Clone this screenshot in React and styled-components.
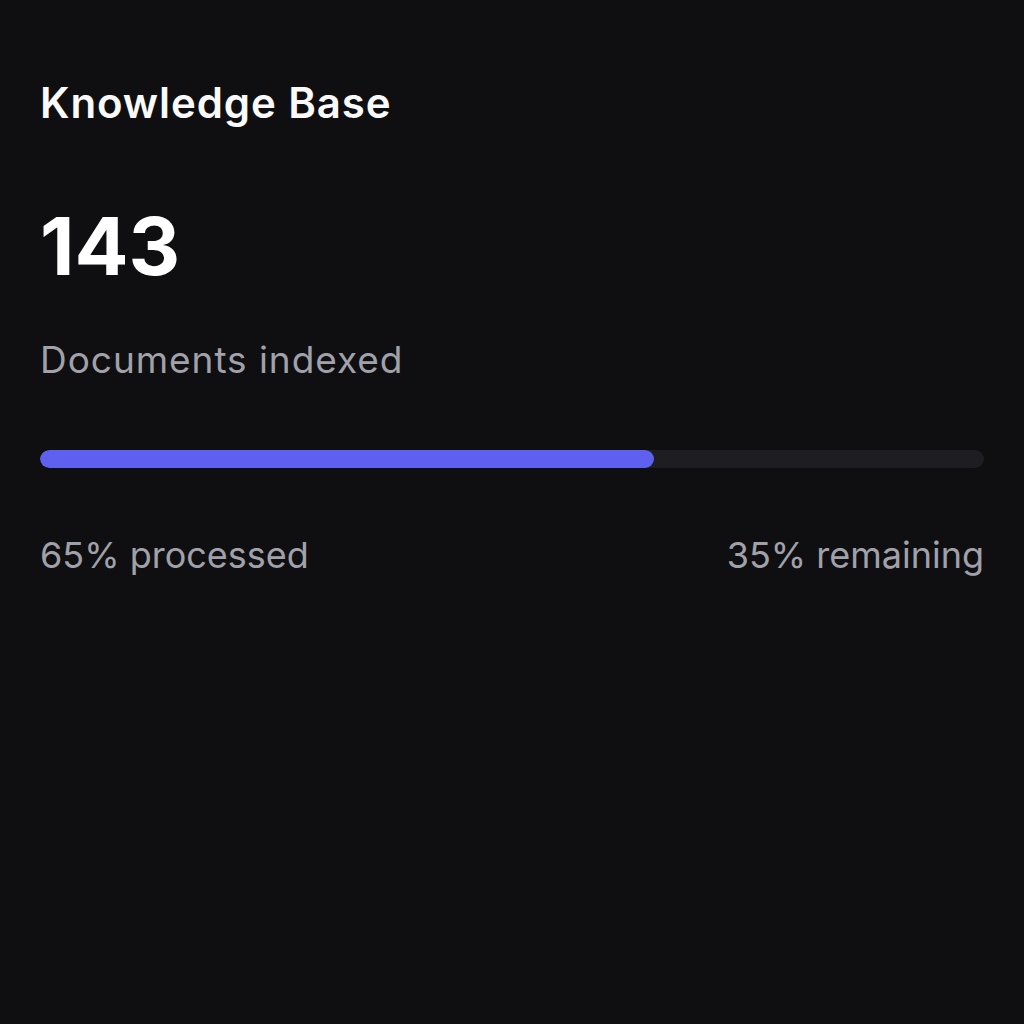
import React from 'react';
import styled, { createGlobalStyle } from 'styled-components';

const GlobalStyle = createGlobalStyle`
    html, body {
        margin: 0;
        padding: 0;
        background: #0f0f12;
    }
    body {
        font-family: Inter, "Noto Sans", sans-serif;
        -webkit-font-smoothing: antialiased;
    }
`;

const Card = styled.div`
    width: 1024px;
    height: 1024px;
    box-sizing: border-box;
    padding: 78px 40px 0 40px;
    background: #0f0f12;
    display: flex;
    flex-direction: column;
`;

const Title = styled.h2`
    margin: 0;
    font-size: 42px;
    font-weight: 600;
    line-height: 50px;
    color: #fafafa;
    letter-spacing: 0.9px;
`;

const Count = styled.div`
    margin-top: 70px;
    font-size: 80px;
    font-weight: 700;
    line-height: 96px;
    color: #ffffff;
`;

const Caption = styled.div`
    margin-top: 44px;
    font-size: 37px;
    line-height: 44px;
    color: #a1a1aa;
    letter-spacing: 0.95px;
`;

const Track = styled.div`
    margin-top: 68px;
    height: 18px;
    border-radius: 9px;
    background: #1e1e22;
    overflow: hidden;
`;

const Fill = styled.div`
    height: 100%;
    border-radius: 9px;
    background: #5e60f0;
`;

const Footer = styled.div`
    margin-top: 65px;
    display: flex;
    justify-content: space-between;
    font-size: 36px;
    line-height: 44px;
    color: #a1a1aa;
    letter-spacing: 0;
`;

const App = () => {
    const processed = 65;

    return (
        <>
            <GlobalStyle />
            <Card>
                <Title>Knowledge Base</Title>
                <Count>143</Count>
                <Caption>Documents indexed</Caption>
                <Track>
                    <Fill style={{ width: `${processed}%` }} />
                </Track>
                <Footer>
                    <span>{processed}% processed</span>
                    <span>{100 - processed}% remaining</span>
                </Footer>
            </Card>
        </>
    );
}

export default App;
